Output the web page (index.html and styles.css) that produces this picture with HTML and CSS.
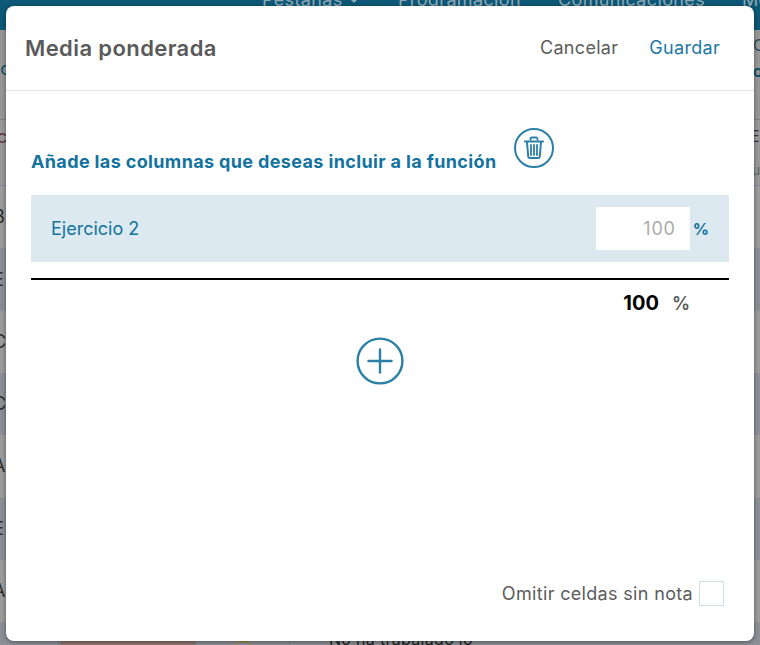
FILE: index.html
```html
<!DOCTYPE html>
<html lang="es">
<head>
<meta charset="utf-8">
<title>Media ponderada</title>
<link rel="stylesheet" href="styles.css">
</head>
<body>
<div class="backdrop">
  <div class="topbar">
    <span class="nav nav-a">Pestañas <span class="caret"></span></span>
    <span class="nav nav-b">Programación</span>
    <span class="nav nav-c">Comunicaciones</span>
    <span class="nav nav-d">Me</span>
  </div>
  <div class="rows">
    <div class="row first"></div>
    <div class="row r1"></div>
    <div class="row r2"></div>
    <div class="row r1"></div>
    <div class="row r2"></div>
    <div class="row r1"></div>
    <div class="row r2"></div>
    <div class="row r1"></div>
    <div class="row r2"></div>
  </div>
  <span class="ltr l0">ic</span>
  <span class="ltr l00">c</span>
  <span class="ltr l1">B</span>
  <span class="ltr l2">E</span>
  <span class="ltr l3">C</span>
  <span class="ltr l4">C</span>
  <span class="ltr l5">A</span>
  <span class="ltr l6">E</span>
  <span class="ltr l7">A</span>
  <span class="ltr r-a">C</span>
  <span class="ltr r-b">or</span>
  <span class="ltr r-c">EC</span>
  <span class="ltr r-d">u</span>
  <span class="peek">No ha trabajado lo</span>
  <span class="swatch"></span>
  <span class="ring"></span>
  <span class="vline v1"></span>
  <span class="vline v2"></span>
  <span class="vline v3"></span>
</div>
<main class="modal">
  <header class="modal-head">
    <h1 class="title">Media ponderada</h1>
    <div class="actions">
      <button class="btn btn-cancel">Cancelar</button>
      <button class="btn btn-save">Guardar</button>
    </div>
  </header>
  <section class="modal-body">
    <div class="heading-row">
      <h2 class="heading">Añade las columnas que deseas incluir a la función</h2>
      <button class="icon-btn trash" aria-label="Eliminar">
        <svg width="40" height="40" viewBox="0 0 40 40" fill="none" stroke="#2b80a8">
          <circle cx="20" cy="20" r="19" stroke-width="2"/>
          <path d="M11 13.5h18" stroke-width="2.2" stroke-linecap="round"/>
          <path d="M16.5 12.5v-1.7a1.3 1.3 0 0 1 1.3-1.3h4.4a1.3 1.3 0 0 1 1.3 1.3v1.7" stroke-width="1.8"/>
          <path d="M13 14l1.2 14.5a1.5 1.5 0 0 0 1.5 1.4h8.6a1.5 1.5 0 0 0 1.5-1.4L27 14" stroke-width="2"/>
          <path d="M17 17v10M20 17v10M23 17v10" stroke-width="1.8" stroke-linecap="round"/>
        </svg>
      </button>
    </div>
    <div class="item">
      <span class="item-name">Ejercicio 2</span>
      <div class="item-value">
        <span class="input">100</span>
        <span class="pct">%</span>
      </div>
    </div>
    <div class="total">
      <span class="total-num">100</span>
      <span class="total-pct">%</span>
    </div>
    <button class="icon-btn plus" aria-label="Añadir">
      <svg width="48" height="48" viewBox="0 0 48 48" fill="none" stroke="#2b80a8" stroke-linecap="round">
        <circle cx="24" cy="24" r="22.4" stroke-width="2.4"/>
        <path d="M12.5 24h23M24 12.5v23" stroke-width="2.4"/>
      </svg>
    </button>
    <label class="omit">
      <span>Omitir celdas sin nota</span>
      <span class="check"></span>
    </label>
  </section>
</main>
</body>
</html>
```
FILE: styles.css
```css
* { box-sizing: border-box; }
html, body { margin: 0; height: 100%; }
body {
  width: 760px;
  height: 645px;
  overflow: hidden;
  position: relative;
  font-family: Inter, "Liberation Sans", sans-serif;
  background: #8f8f8f;
  padding: 6px;
}
.backdrop {
  position: absolute;
  inset: 0;
  overflow: hidden;
  background: #979797;
  font-family: Inter, sans-serif;
}
.topbar {
  height: 30px;
  background: #0e5877;
  position: relative;
}
.nav {
  position: absolute;
  top: -11px;
  font-size: 18px;
  letter-spacing: .36px;
  color: #8fa9b6;
  white-space: nowrap;
}
.caret {
  display: inline-block;
  width: 0;
  height: 0;
  margin-left: 3px;
  vertical-align: 3px;
  border: 3px solid transparent;
  border-top-color: #8fa9b6;
  border-bottom: 0;
}
.nav-a { left: 262px; }
.nav-b { left: 398px; }
.nav-c { left: 558px; }
.nav-d { left: 742px; }
.rows {
  margin-top: 89px;
  border-top: 1px solid #7f7f7f;
  display: flex;
  flex-direction: column;
}
.row { height: 62.33px; flex: none; }
.first { height: 66px; background: #999; border-bottom: 1px solid #7f8ba0; }
.r1 { background: #9b9b9b; }
.r2 { background: #8b8f95; }
.ltr {
  position: absolute;
  left: -7px;
  font-size: 18px;
  color: #2d2d2d;
  line-height: 20px;
}
.l0 { top: 59px; left: -4px; color: #0d4d69; }
.l00 { top: 127px; left: -3px; color: #5f3a3a; }
.l1 { top: 207px; }
.l2 { top: 270px; }
.l3 { top: 332px; }
.l4 { top: 394px; }
.l5 { top: 456px; }
.l6 { top: 519px; }
.l7 { top: 581px; }
.r-a { left: 753px; top: 35px; color: #2d4f5e; font-size: 16px; }
.r-b { left: 753px; top: 61px; color: #0d4d69; font-weight: 600; font-size: 16px; }
.r-c { left: 750px; top: 126px; color: #3a3050; font-size: 16px; }
.r-d { left: 752px; top: 160px; color: #666; font-size: 14px; }
.peek { position: absolute; left: 329px; top: 629px; font-size: 16px; letter-spacing: .3px; color: #1d1d1d; white-space: nowrap; }
.swatch { position: absolute; left: 60px; top: 641px; width: 136px; height: 4px; background: #8f7570; }
.ring { position: absolute; left: 231px; top: 641px; width: 24px; height: 24px; border: 1.5px solid #b88a1c; border-radius: 50%; }
.vline { position: absolute; top: 641px; width: 1px; height: 4px; background: #6f7f92; }
.v1 { left: 58px; }
.v2 { left: 195px; }
.v3 { left: 289px; }

.modal {
  position: relative;
  width: 748px;
  height: 635px;
  background: #fff;
  border-radius: 8px;
  box-shadow: 0 1px 4px rgba(0, 0, 0, .45);
  display: flex;
  flex-direction: column;
}
.modal-head {
  height: 85px;
  flex: none;
  border-bottom: 1px solid #e3e3e3;
  display: flex;
  align-items: center;
  justify-content: space-between;
  padding: 0 34px 0 19px;
}
.title {
  margin: 0;
  font-size: 22px;
  font-weight: 600;
  letter-spacing: .4px;
  color: #5a5a5a;
}
.actions { display: flex; gap: 31px; margin-bottom: 2px; }
.btn {
  border: 0;
  background: none;
  padding: 0;
  font-family: inherit;
  font-size: 18px;
  letter-spacing: .3px;
}
.btn-cancel { color: #5c5c5c; }
.btn-save { color: #1d78a4; }
.modal-body {
  flex: 1;
  display: flex;
  flex-direction: column;
  padding: 38px 25px 0;
}
.heading-row { display: flex; align-items: flex-start; gap: 18px; height: 66px; }
.heading {
  margin: 22px 0 0;
  font-size: 18px;
  font-weight: 700;
  letter-spacing: .36px;
  color: #13739f;
  white-space: nowrap;
}
.icon-btn {
  border: 0;
  background: none;
  padding: 0;
  display: block;
  flex: none;
}
.trash { margin-top: -1px; }
.item {
  height: 67px;
  background: #dce9f0;
  display: flex;
  align-items: center;
  justify-content: space-between;
  padding: 0 20px;
}
.item-name { font-size: 18px; color: #13739f; }
.item-value { display: flex; align-items: center; gap: 3px; }
.input {
  width: 94px;
  height: 43px;
  background: #fff;
  color: #aaa;
  font-size: 18px;
  letter-spacing: .8px;
  line-height: 43px;
  text-align: right;
  padding-right: 14px;
}
.pct { font-size: 16px; font-weight: 700; color: #13739f; }
.total {
  margin-top: 16px;
  border-top: 2px solid #000;
  height: 48px;
  display: flex;
  align-items: center;
  justify-content: flex-end;
  padding-right: 39px;
  gap: 13px;
}
.total-num { font-size: 20px; font-weight: 700; color: #000; }
.total-pct { font-size: 18px; font-weight: 600; color: #5a5a5a; }
.plus { align-self: center; margin-top: 11px; line-height: 0; }
.omit {
  margin-top: auto;
  margin-bottom: 35px;
  align-self: flex-end;
  margin-right: 5px;
  display: flex;
  align-items: center;
  gap: 6px;
  font-size: 18px;
  letter-spacing: .33px;
  color: #5c5c5c;
}
.check {
  width: 25px;
  height: 25px;
  border: 1px solid #cfdfe3;
  background: #fff;
}
```
